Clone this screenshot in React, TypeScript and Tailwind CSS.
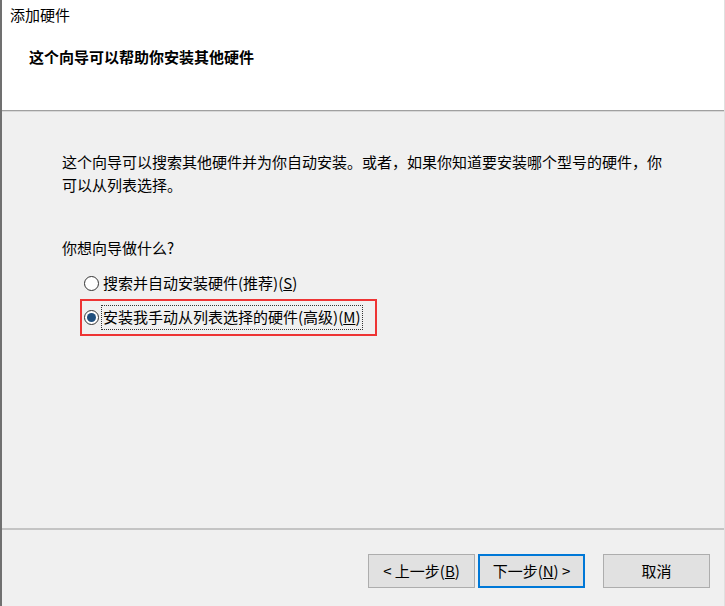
import React from "react";

const Radio = ({ checked }: { checked?: boolean }) => (
  <span className="flex h-[15px] w-[15px] shrink-0 items-center justify-center rounded-full border border-[#333333] bg-white">
    {checked && <span className="h-[9px] w-[9px] rounded-full bg-[#1f4f7e]" />}
  </span>
);

const Button = ({
  children,
  primary,
}: {
  children: React.ReactNode;
  primary?: boolean;
}) => (
  <button
    className={
      primary
        ? "flex h-[34px] w-[107px] items-center justify-center border-2 border-[#0078d7] bg-[#e1e1e1] text-[15px] text-black"
        : "flex h-[34px] w-[107px] items-center justify-center border border-[#adadad] bg-[#e1e1e1] text-[15px] text-black"
    }
  >
    {children}
  </button>
);

export default function App() {
  return (
    <div className="flex h-[606px] w-[725px] flex-col overflow-hidden border-l-2 border-r border-l-[#707070] border-r-[#e0e0e0] bg-[#f0f0f0] font-['Noto_Sans_CJK_SC',sans-serif] text-black">
      {/* Header */}
      <div className="h-[110px] bg-white">
        <p className="pl-2 pt-[5px] text-[15px] leading-[20px]">添加硬件</p>
        <p className="mt-[22px] pl-[27px] text-[15px] font-bold leading-[20px]">
          这个向导可以帮助你安装其他硬件
        </p>
      </div>
      <div className="h-px bg-[#a0a0a0]" />
      <div className="h-px bg-[#d8d8d8]" />

      {/* Body */}
      <div className="h-[416px] pl-[60px] pt-[38px]">
        <p className="w-[610px] text-[15px] leading-[23px]">
          这个向导可以搜索其他硬件并为你自动安装。或者，如果你知道要安装哪个型号的硬件，你可以从列表选择。
        </p>
        <p className="mt-[40px] text-[15px] leading-[23px]">你想向导做什么?</p>

        <div className="mt-[13px] flex h-[23px] items-center gap-[4px] pl-[22px] text-[15px]">
          <Radio />
          <span>
            搜索并自动安装硬件(推荐)(<span className="underline">S</span>)
          </span>
        </div>

        <div className="ml-[18px] mt-[4px] flex h-[37px] w-[297px] items-center gap-[2px] border-2 border-[#ee3434] pl-[2px] text-[15px]">
          <Radio checked />
          <span className="flex h-[25px] items-center border border-dotted border-[#333333] pl-px pr-[2px]">
            安装我手动从列表选择的硬件(高级)(<span className="underline">M</span>)
          </span>
        </div>
      </div>

      <div className="h-[2px] bg-[#c4c4c4]" />

      {/* Footer */}
      <div className="flex flex-1 items-start justify-end pr-[14px] pt-[24px]">
        <Button>
          &lt;&nbsp;上一步(<span className="underline">B</span>)
        </Button>
        <div className="ml-[3px]">
          <Button primary>
            下一步(<span className="underline">N</span>)&nbsp;&gt;
          </Button>
        </div>
        <div className="ml-[18px]">
          <Button>取消</Button>
        </div>
      </div>
    </div>
  );
}
